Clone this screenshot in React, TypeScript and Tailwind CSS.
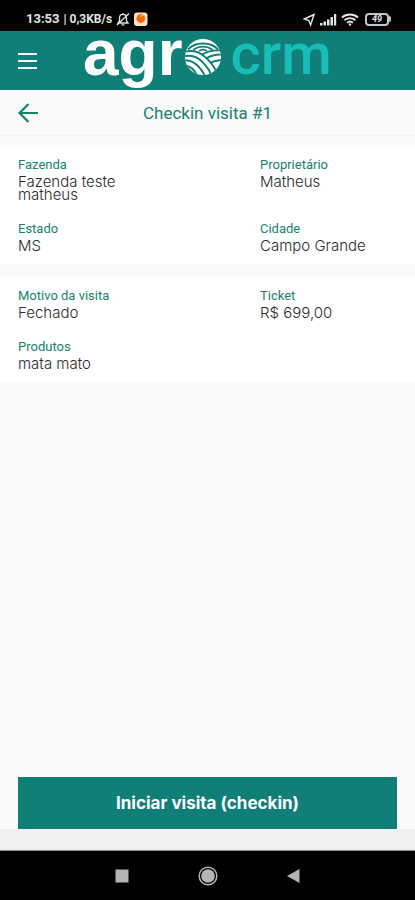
import React from "react";

type FieldProps = { label: string; value: string };

const farm: FieldProps[] = [
  { label: "Fazenda", value: "Fazenda teste matheus" },
  { label: "Proprietário", value: "Matheus" },
  { label: "Estado", value: "MS" },
  { label: "Cidade", value: "Campo Grande" },
];

const visit: FieldProps[] = [
  { label: "Motivo da visita", value: "Fechado" },
  { label: "Ticket", value: "R$ 699,00" },
  { label: "Produtos", value: "mata mato" },
];

const Field = ({ label, value }: FieldProps) => (
  <div>
    <dt className="font-['Roboto',sans-serif] text-[13px] leading-4 text-[#16836f]">
      {label}
    </dt>
    <dd className="max-w-[120px] pt-0.5 text-[15px] leading-[13px] font-light text-[#2c2c2c]">
      {value}
    </dd>
  </div>
);

const StatusBar = () => (
  <div className="flex h-[31px] items-end justify-between bg-black pr-6 pb-1 pl-[26px] text-[#e4e4e4]">
    <div className="flex items-center gap-1 font-['Roboto',sans-serif] leading-4 font-bold">
      <span className="text-[13px]">13:53</span>
      <span className="text-[12px]">| 0,3KB/s</span>
      <svg className="h-4 w-3.5" viewBox="0 0 14 16" fill="none" stroke="currentColor" strokeWidth="1.3">
        <path d="M2 12h10l-1.5-2V7c0-2-1.4-3.6-3.5-3.6S3.5 5 3.5 7v3zM5.5 13.8h3M7 2v1.4M1 14 13 2.5" />
      </svg>
      <svg className="size-4" viewBox="0 0 16 16">
        <rect x="0" y="1.5" width="13.5" height="13.5" rx="3" fill="#fbe3c4" />
        <circle cx="6.8" cy="7.5" r="4.4" fill="#f26a0c" />
        <path d="M6.5 5.5a3 3 0 0 1 3-1" fill="none" stroke="#ffc35c" strokeWidth="1.2" />
      </svg>
    </div>
    <div className="flex items-center gap-1">
      <svg className="h-4 w-3" viewBox="0 0 12 16" fill="none" stroke="currentColor" strokeWidth="1.4">
        <path d="M1.2 8 11 3.5 7.6 14 5.8 9.500z" />
      </svg>
      <svg className="h-4 w-[18px]" viewBox="0 0 18 16" fill="currentColor">
        <path d="M1 12h2.5v2.5H1zM4.500 10.500H7v4H4.500zM8 8.500h2.500v6H8zM11.500 6H14v8.500h-2.500zM15 3h2.200v11.500H15z" />
      </svg>
      <svg className="h-4 w-[18px]" viewBox="0 0 18 16" fill="none" stroke="currentColor" strokeWidth="1.9">
        <path d="M1 6.500c4.500-4 11.500-4 16 0M3.500 9.200c3.200-2.800 7.800-2.800 11 0M6 11.700c1.800-1.500 4.200-1.500 6 0" />
        <circle cx="9" cy="13.500" r="1.200" fill="currentColor" stroke="none" />
      </svg>
      <div className="ml-0.5 flex items-center">
        <span className="flex h-[13px] w-6 items-center justify-center rounded-[4px] border-2 border-[#c4c4c4] font-['Roboto',sans-serif] text-[9px] leading-none font-bold italic">
          49
        </span>
        <span className="h-1.5 w-0.5 rounded-r bg-[#c4c4c4]" />
      </div>
    </div>
  </div>
);

// Round field mark that stands for the "o" of agro
const FieldMark = () => (
  <svg className="size-9" viewBox="0 0 36 36" fill="none">
    <defs>
      <clipPath id="mark">
        <circle cx="18" cy="18" r="18" />
      </clipPath>
    </defs>
    <g clipPath="url(#mark)">
      <rect width="36" height="36" fill="#fff" />
      <g stroke="#0f7f78" strokeWidth="1.9">
        <path d="M3 10.500C10 2.500 26 2.500 33 10.500M8.500 11c5-4.500 14-4.500 19 0M14 12c2.500-1.700 5.500-1.700 8 0" />
        <path d="M0 12.500c8-1.500 14 0 19.500 5 6.500 5.500 9.500 9.500 11.500 15" />
        <path d="M0 17c7-1 12 1 16.500 5 5 5 8 8.500 9.500 14M0 21.500c5-.5 9 1.500 13 5.500 3 3 5 6 6.500 9M0 26.500c5 .5 9 3.500 12 10" />
        <path d="M17 15.500c5-3 11-4.500 19-4M21 19.500c4-2.500 9-4 15-4M25 24c3-1.700 6.500-2.700 11-3" />
      </g>
    </g>
  </svg>
);

const Header = () => (
  <header className="flex h-[59px] items-start bg-[#0f7f78] pl-[18px]">
    <button type="button" aria-label="Menu" className="mt-[22px] flex w-[19px] flex-col gap-[5px]">
      <span className="h-[2px] bg-[#eefaf6]" />
      <span className="h-[2px] bg-[#eefaf6]" />
      <span className="h-[2px] bg-[#eefaf6]" />
    </button>
    <div className="ml-[46px] flex items-start">
      <span className="font-['Liberation_Sans',sans-serif] text-[64px] leading-[44px] font-bold text-white">
        agr
      </span>
      <span className="mt-2 ml-0.5">
        <FieldMark />
      </span>
      <span className="ml-2.5 font-['Roboto',sans-serif] text-[58px] leading-[46px] font-medium text-[#18bdb9]">
        crm
      </span>
    </div>
  </header>
);

const App = () => {
  return (
    <div className="flex min-h-screen flex-col bg-[#fafafa] font-['Inter',sans-serif]">
      <StatusBar />
      <Header />
      <div className="grid h-[46px] grid-cols-[24px_1fr_24px] items-center border-b border-[#f4f4f4] px-4">
        <button type="button" aria-label="Voltar" className="text-[#16836f]">
          <svg className="size-6" viewBox="0 0 24 24" fill="none" stroke="currentColor" strokeWidth="2.2">
            <path d="M22 12H4M12.5 3 3.5 12l9 9" />
          </svg>
        </button>
        <h1 className="text-center font-['Roboto',sans-serif] text-[17px] leading-6 text-[#16836f]">
          Checkin visita #1
        </h1>
      </div>

      <main className="flex flex-1 flex-col">
        <dl className="mt-[9px] grid grid-cols-[242fr_155fr] gap-y-5 bg-white pt-3 pb-3 pl-[18px]">
          {farm.map((field) => (
            <Field key={field.label} {...field} />
          ))}
        </dl>
        <dl className="mt-3 grid grid-cols-[242fr_155fr] gap-y-5 bg-white pt-3 pb-3 pl-[18px]">
          {visit.map((field) => (
            <Field key={field.label} {...field} />
          ))}
        </dl>
        <div className="mt-auto px-[18px]">
          <button
            type="button"
            className="h-[52px] w-full bg-[#0f7f78] text-[17px] leading-6 font-bold text-white"
          >
            Iniciar visita (checkin)
          </button>
        </div>
      </main>

      <div className="h-[22px] border-b border-[#8a8a8a] bg-[#f0f0f0]" />
      <nav className="flex h-[49px] items-center justify-center gap-[66px] bg-black text-[#b4b4b4]">
        <button type="button" aria-label="Recentes">
          <svg className="size-5" viewBox="0 0 20 20" fill="currentColor">
            <path d="M3.5 3.5h13v13h-13z" />
          </svg>
        </button>
        <button type="button" aria-label="Início">
          <svg className="size-5" viewBox="0 0 20 20">
            <circle cx="10" cy="10" r="8.8" fill="none" stroke="currentColor" strokeWidth="1.5" />
            <circle cx="10" cy="10" r="6.8" fill="currentColor" />
          </svg>
        </button>
        <button type="button" aria-label="Voltar ao app anterior">
          <svg className="size-5" viewBox="0 0 20 20" fill="currentColor">
            <path d="M3 10 15.5 3v14z" />
          </svg>
        </button>
      </nav>
    </div>
  );
};

export default App;
